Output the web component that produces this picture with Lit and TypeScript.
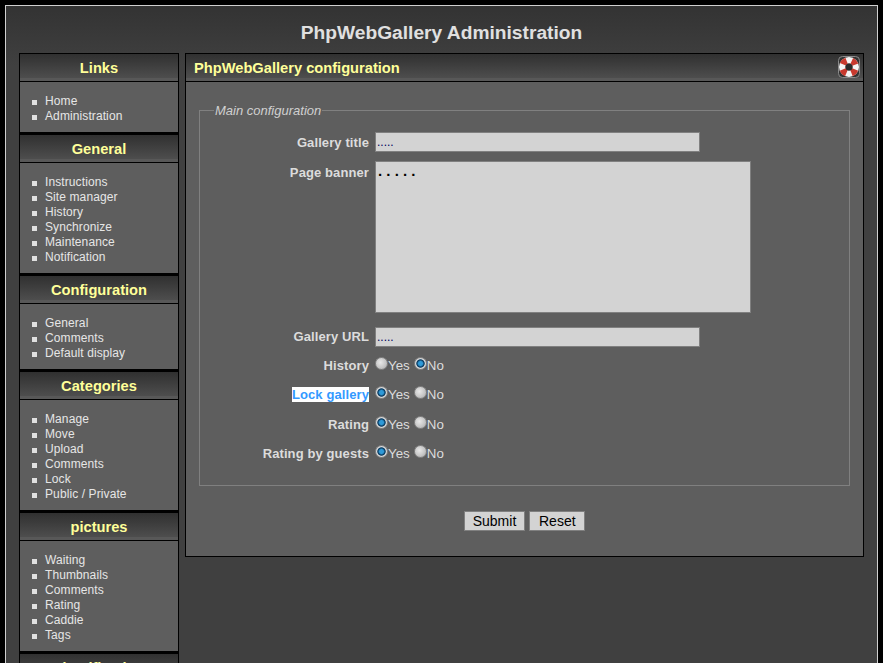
import { LitElement, html, css } from "lit";
import { customElement } from "lit/decorators.js";

const menus: [string, string[]][] = [
  ["Links", ["Home", "Administration"]],
  ["General", ["Instructions", "Site manager", "History", "Synchronize", "Maintenance", "Notification"]],
  ["Configuration", ["General", "Comments", "Default display"]],
  ["Categories", ["Manage", "Move", "Upload", "Comments", "Lock", "Public / Private"]],
  ["pictures", ["Waiting", "Thumbnails", "Comments", "Rating", "Caddie", "Tags"]],
  ["Identification", ["Logout"]],
];

const radios: [string, boolean, boolean][] = [
  ["History", false, false],
  ["Lock gallery", true, true],
  ["Rating", true, false],
  ["Rating by guests", true, false],
];

@customElement("app-root")
export class AppRoot extends LitElement {
  static styles = css`
    :host {
      display: block;
      height: 663px;
      overflow: hidden;
      background: #000;
      font-family: "Liberation Sans", Arial, sans-serif;
      font-size: 12px;
      color: #e0e0e0;
      padding: 5px 5px 0;
      box-sizing: border-box;
    }
    .frame {
      border: 1px solid #d0d0d0;
      border-bottom: none;
      background: linear-gradient(#333 0, #404040 60px);
      padding: 0 13px;
      min-height: 800px;
    }
    h1 {
      margin: 0;
      height: 47px;
      line-height: 53px;
      text-align: center;
      font-size: 19.2px;
      font-weight: bold;
      color: #e0e0e0;
    }
    .cols { display: flex; gap: 6px; align-items: flex-start; }
    .side { width: 160px; flex: none; }
    .main { flex: 1; min-width: 0; }
    .title {
      box-sizing: border-box;
      height: 29px;
      border: 1px solid #000;
      background: linear-gradient(#303030, #4e4e4e 90%, #585858 90%);
      color: #ffff99;
      font-size: 14.67px;
      font-weight: bold;
      line-height: 28px;
      text-align: center;
      position: relative;
    }
    .main .title { text-align: left; padding-left: 8px; }
    .box {
      border: 1px solid #000;
      border-top: none;
      background: #5e5e5e;
    }
    .side .box {
      border-bottom-width: 2px;
      padding: 12px 0 8px 0;
    }
    ul { margin: 0; padding: 0; list-style: none; }
    li {
      height: 15px;
      line-height: 15px;
      display: flex;
      align-items: center;
      gap: 8px;
      color: #e6e6e6;
      letter-spacing: 0.1px;
    }
    li::before {
      content: "";
      width: 5px;
      height: 5px;
      background: #e0e0e0;
      margin-left: 12px;
      margin-top: 1px;
      flex: none;
    }
    .help { position: absolute; right: 3px; top: 2px; display: block; }
    .main .box { padding: 21px 13px 29px 13px; height: 424px; }
    fieldset {
      margin: 0;
      padding: 14px 0 0 0;
      border: 1px solid #808080;
      height: 367px;
      box-sizing: content-box;
      min-width: 0;
    }
    legend {
      margin-left: 14px;
      padding: 0 1px 0 1px;
      font-style: italic;
      font-size: 13px;
      color: #d0d0d0;
    }
    .form {
      display: grid;
      grid-template-columns: 169px 1fr;
      column-gap: 6px;
    }
    .lab {
      font-size: 13px;
      letter-spacing: 0.1px;
      font-weight: bold;
      text-align: right;
      color: #dcdcdc;
    }
    .lab.hl span { background: #fff; color: #3399ff; }
    input[type="text"], textarea {
      display: block;
      box-sizing: border-box;
      background: #d3d3d3;
      border: 1px solid #808080;
      padding: 0 1px;
      margin: 0;
      color: #000060;
      font: 12px "Liberation Sans", Arial, sans-serif;
      outline: none;
      resize: none;
    }
    input[type="text"] { width: 325px; height: 20px; }
    textarea {
      width: 376px;
      height: 152px;
      padding: 0 2px;
      color: #000;
      font: bold 15px "Liberation Sans", Arial, sans-serif;
    }
    .r1 { height: 29px; line-height: 22px; }
    .r2 { height: 166px; line-height: 24px; }
    .r3 { height: 30px; line-height: 20px; }
    .r4 { height: 29.3px; line-height: 18px; }
    .radios { display: flex; align-items: flex-start; font-size: 13.33px; height: 29.3px; line-height: 18px; color: #dcdcdc; }
    .radio {
      display: block;
      width: 13px;
      height: 13px;
      margin: 0;
      border-radius: 50%;
      box-sizing: border-box;
      background: radial-gradient(circle at 40% 40%, #e8e8e8 0, #c4c4c4 60%, #9a9a9a 100%);
      border: 1px solid #858585;
      flex: none;
    }
    .radio.on {
      background: radial-gradient(circle at 50% 50%, #2f9ad8 0 2px, #0a3c62 3.5px, #0a3c62 3.8px, #dcdcdc 4.6px, #a8a8a8);
    }
    .opt { display: flex; }
    .opt + .opt { margin-left: 4px; }
    .buttons { display: flex; justify-content: center; gap: 4px; margin-top: 25px; }
    button {
      box-sizing: border-box;
      height: 20px;
      padding: 0 8px;
      min-width: 56px;
      background: #d3d3d3;
      border: 1px solid #808080;
      color: #000;
      font: 14px "Liberation Sans", Arial, sans-serif;
      line-height: 18px;
    }
  `;

  render() {
    return html`
      <div class="frame">
        <h1>PhpWebGallery Administration</h1>
        <div class="cols">
          <div class="side">
            ${menus.map(
              ([t, items]) => html`
                <div class="title">${t}</div>
                <div class="box">
                  <ul>${items.map((i) => html`<li>${i}</li>`)}</ul>
                </div>
              `
            )}
          </div>
          <div class="main">
            <div class="title">
              PhpWebGallery configuration
              <svg class="help" width="22" height="22" viewBox="0 0 22 22">
                <rect x="0.5" y="0.5" width="21" height="21" rx="4" fill="#333" stroke="#8a8a8a"/>
                <circle cx="11" cy="11" r="6.75" fill="none" stroke="#f4f4f4" stroke-width="6.5"/>
                <circle cx="11" cy="11" r="6.75" fill="none" stroke="#c8392e" stroke-width="6.5" stroke-dasharray="5.3 5.3" stroke-dashoffset="-2.65"/>
                <circle cx="11" cy="11" r="3.5" fill="#2a2a2a"/>
              </svg>
            </div>
            <div class="box">
              <fieldset>
                <legend>Main configuration</legend>
                <div class="form">
                  <div class="lab r1">Gallery title</div>
                  <div class="r1"><input type="text" value="....." /></div>
                  <div class="lab r2">Page banner</div>
                  <div class="r2"><textarea .value=${". . . . ."}></textarea></div>
                  <div class="lab r3">Gallery URL</div>
                  <div class="r3"><input type="text" value="....." /></div>
                  ${radios.map(
                    ([l, yes, hl]) => html`
                      <div class="lab r4 ${hl ? "hl" : ""}"><span>${l}</span></div>
                      <div class="radios">
                        <label class="opt"><i class="radio ${yes ? "on" : ""}"></i>Yes</label>
                        <label class="opt"><i class="radio ${yes ? "" : "on"}"></i>No</label>
                      </div>
                    `
                  )}
                </div>
              </fieldset>
              <div class="buttons">
                <button>Submit</button>
                <button>Reset</button>
              </div>
            </div>
          </div>
        </div>
      </div>
    `;
  }
}
